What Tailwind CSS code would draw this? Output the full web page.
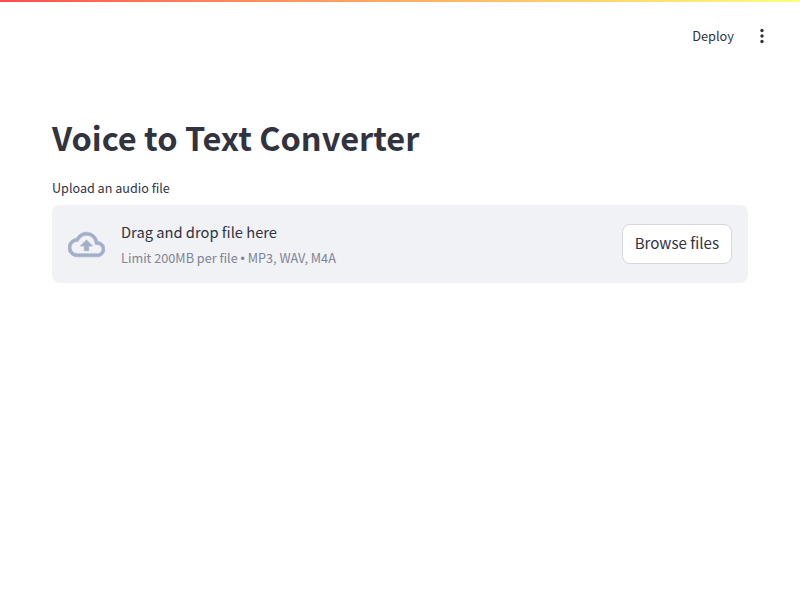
<!DOCTYPE html>
<html lang="en">
<head>
  <meta charset="UTF-8" />
  <title>Voice to Text Converter</title>
  <script src="https://cdn.jsdelivr.net/npm/@tailwindcss/browser@4"></script>
</head>
<body class="bg-white min-h-screen font-['Noto_Sans_CJK_SC',sans-serif] text-[#31333f]">
  <!-- Gradient line -->
  <div class="h-0.5 bg-gradient-to-r from-[#ff4b4b] to-[#fffd80]"></div>

  <!-- Toolbar -->
  <header class="flex items-center justify-end h-[68px] pr-[26px]">
    <span class="text-[12.8px] mr-4">Deploy</span>
    <svg class="w-6 h-6 text-[#31333f]" viewBox="0 0 24 24" fill="currentColor">
      <circle cx="12" cy="6.5" r="1.7" />
      <circle cx="12" cy="12" r="1.7" />
      <circle cx="12" cy="17.5" r="1.7" />
    </svg>
  </header>

  <main class="px-[52px] pt-[45px]">
    <h1 class="text-[32.5px] leading-[44px] font-bold">Voice to Text Converter</h1>
    <label class="block text-[12.6px] mt-[20px] mb-[6px] leading-5 -translate-y-px">Upload an audio file</label>

    <!-- Dropzone -->
    <section class="flex items-center justify-between bg-[#f0f2f6] rounded-lg h-[78px] px-4">
      <div class="flex items-center">
        <svg class="w-[37px] h-[37px] mr-4 text-[#a3afc8]" viewBox="0 0 24 24" fill="currentColor" stroke="currentColor" stroke-width="0.4">
          <path d="M19.35 10.04C18.67 6.59 15.64 4 12 4 9.11 4 6.6 5.64 5.35 8.04 2.34 8.36 0 10.91 0 14c0 3.31 2.69 6 6 6h13c2.76 0 5-2.24 5-5 0-2.64-2.05-4.78-4.65-4.96zM19 18H6c-2.21 0-4-1.79-4-4 0-2.05 1.53-3.76 3.56-3.97l1.07-.11.5-.95C8.08 7.14 9.94 6 12 6c2.62 0 4.88 1.86 5.39 4.43l.3 1.5 1.53.11c1.56.1 2.78 1.41 2.78 2.96 0 1.65-1.35 3-3 3zM8 13h2.55v3h2.9v-3H16l-4-4z" />
        </svg>
        <div class="pt-[1px]">
          <p class="text-[14.7px] leading-6">Drag and drop file here</p>
          <p class="text-[12.7px] leading-5 mt-1 text-[#808495]">Limit 200MB per file <span class="font-['Liberation_Sans',sans-serif] text-[12px]">•</span> MP3, WAV, M4A</p>
        </div>
      </div>
      <button class="bg-white border border-[#d5d7de] rounded-lg h-10 px-3 pb-[4px] text-[15.1px]">Browse files</button>
    </section>
  </main>
</body>
</html>
